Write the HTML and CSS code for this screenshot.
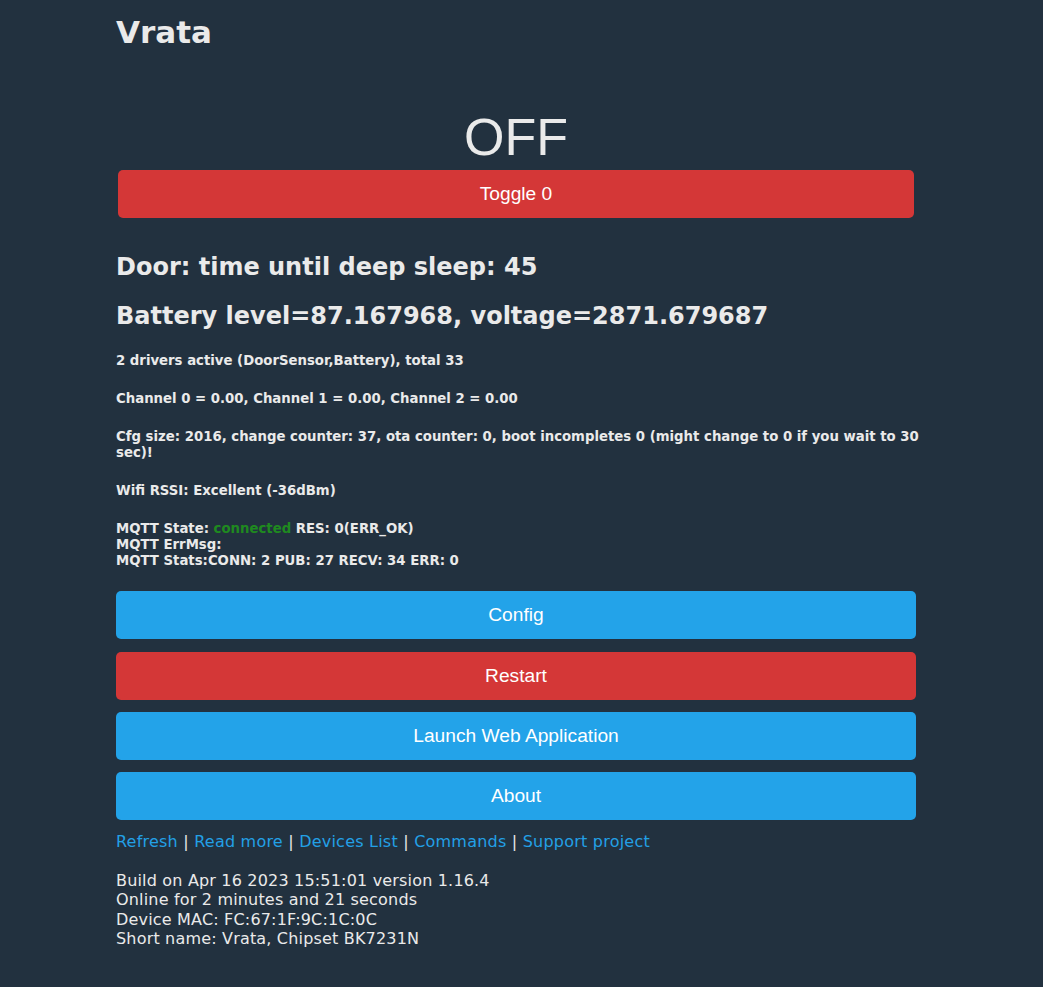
FILE: index.html
```html
<!DOCTYPE html>
<html>
<head>
<meta charset="utf-8">
<title>Vrata</title>
<link rel="stylesheet" href="styles.css">
</head>
<body>
<div class="page">
  <h1 class="title">Vrata</h1>
  <div class="state">OFF</div>
  <div class="toggle-row"><button class="btn btn-red toggle">Toggle 0</button></div>
  <h2 class="h2 first">Door: time until deep sleep: 45</h2>
  <h2 class="h2">Battery level=87.167968, voltage=2871.679687</h2>
  <h5 class="h5">2 drivers active (DoorSensor,Battery), total 33</h5>
  <h5 class="h5">Channel 0 = 0.00, Channel 1 = 0.00, Channel 2 = 0.00</h5>
  <h5 class="h5">Cfg size: 2016, change counter: 37, ota counter: 0, boot incompletes 0 (might change to 0 if you wait to 30 sec)!</h5>
  <h5 class="h5">Wifi RSSI: Excellent (-36dBm)</h5>
  <h5 class="h5">MQTT State: <span class="ok">connected</span> RES: 0(ERR_OK)<br>MQTT ErrMsg: <br>MQTT Stats:CONN: 2 PUB: 27 RECV: 34 ERR: 0</h5>
  <div class="buttons">
    <button class="btn btn-blue">Config</button>
    <button class="btn btn-red">Restart</button>
    <button class="btn btn-blue">Launch Web Application</button>
    <button class="btn btn-blue">About</button>
  </div>
  <div class="links"><a href="#">Refresh</a> | <a href="#">Read more</a> | <a href="#">Devices List</a> | <a href="#">Commands</a> | <a href="#">Support project</a></div>
  <div class="info">Build on Apr 16 2023 15:51:01 version 1.16.4<br>Online for 2 minutes and 21 seconds<br>Device MAC: FC:67:1F:9C:1C:0C<br>Short name: Vrata, Chipset BK7231N</div>
</div>
</body>
</html>
```
FILE: styles.css
```css
html, body {
  margin: 0;
  padding: 0;
  background: #22313f;
}
body {
  font-family: "DejaVu Sans", Verdana, sans-serif;
  color: #eaeaea;
  line-height: 1.215;
  font-size: 16px;
}
.page {
  width: 811px;
  margin-left: 116px;
  padding-bottom: 20px;
}
.title {
  font-size: 31px;
  font-weight: bold;
  margin: 14px 0 0;
  line-height: 1.215;
}
.state {
  width: 800px;
  font-family: "Liberation Sans", Arial, sans-serif;
  font-size: 52px;
  line-height: 62px;
  text-align: center;
  margin-top: 54px;
  margin-bottom: 2px;
}
.toggle-row {
  width: 796px;
  padding: 0 2px;
}
.btn {
  display: block;
  width: 100%;
  border: 0;
  border-radius: 5px;
  font-family: "Liberation Sans", Arial, sans-serif;
  font-size: 19.2px;
  color: #fff;
  height: 48px;
  padding: 0;
  cursor: pointer;
}
.btn-blue { background: #23a3e9; }
.btn-red { background: #d43737; }
.h2 {
  font-size: 24px;
  font-weight: bold;
  margin: 20px 0;
}
.h2.first { margin-top: 35px; }
.h5 {
  font-size: 13.28px;
  font-weight: bold;
  margin: 21.8px 0;
}
.ok { color: #1f8a1f; }
.buttons {
  width: 800px;
  display: flex;
  flex-direction: column;
  gap: 12.3px;
  margin-top: 22.4px;
}
.links {
  margin-top: 11.7px;
  letter-spacing: 0.22px;
}
.links a {
  color: #23a0e6;
  text-decoration: none;
}
.info {
  margin-top: 19.3px;
  letter-spacing: 0.18px;
}
```
